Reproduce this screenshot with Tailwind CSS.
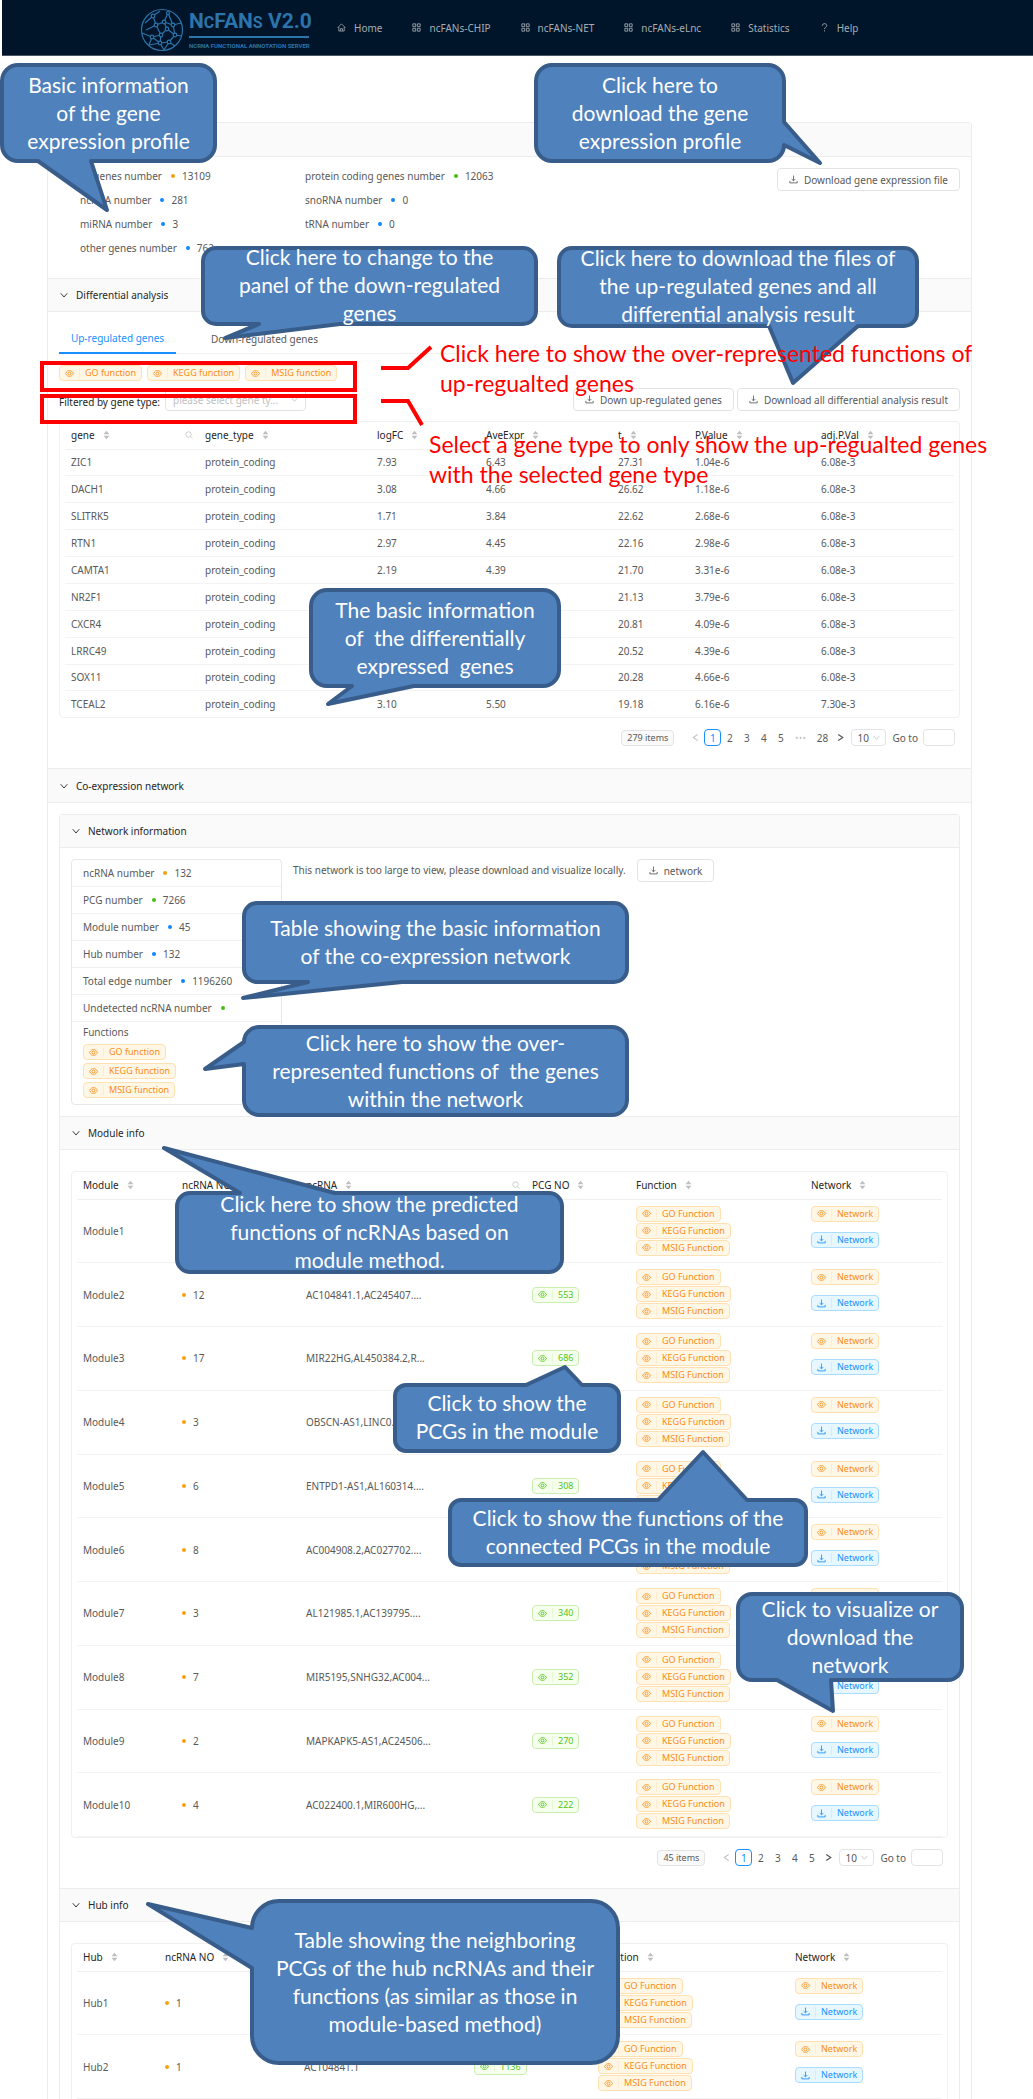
<!DOCTYPE html>
<html lang="en">
<head>
<meta charset="utf-8">
<title>ncFANs V2.0</title>
<script src="https://cdn.jsdelivr.net/npm/@tailwindcss/browser@4"></script>
</head>
<body class="relative bg-white font-['Noto_Sans',sans-serif] text-[10px] leading-4 text-[#595959]">

<svg class="hidden" aria-hidden="true">
  <symbol id="eye" viewBox="0 0 16 16"><g fill="none" stroke="currentColor" stroke-width="1.500"><path d="M1 8C3 4.300 5.300 2.800 8 2.800S13 4.300 15 8c-2 3.700-4.300 5.200-7 5.200S3 11.700 1 8z"/><circle cx="8" cy="8" r="2.600"/></g></symbol>
  <symbol id="download" viewBox="0 0 16 16"><path d="M8 1v9M4.800 7.200 8 10.400l3.200-3.200M1.500 10.500V14h13v-3.500" fill="none" stroke="currentColor" stroke-width="1.500"/></symbol>
  <symbol id="down" viewBox="0 0 16 16"><path d="M1.500 4.500 8 12l6.500-7.500" fill="none" stroke="currentColor" stroke-width="1.800"/></symbol>
  <symbol id="left" viewBox="0 0 16 16"><path d="M12 2.500 4 8l8 5.500" fill="none" stroke="currentColor" stroke-width="1.800"/></symbol>
  <symbol id="right" viewBox="0 0 16 16"><path d="M4 2.500 12 8l-8 5.500" fill="none" stroke="currentColor" stroke-width="2.200"/></symbol>
  <symbol id="sort" viewBox="0 0 8 12"><path d="M4 .8 7.500 5H.5zM4 11.200.5 7h7z" fill="currentColor"/></symbol>
  <symbol id="search" viewBox="0 0 16 16"><g fill="none" stroke="currentColor" stroke-width="1.500"><circle cx="7" cy="7" r="5.500"/><path d="m11 11 4 4"/></g></symbol>
  <symbol id="home" viewBox="0 0 16 16"><path d="M1 8.500 8 1.500l7 7M3.200 7v7.300h9.600V7M6.300 14v-4h3.400v4" fill="none" stroke="currentColor" stroke-width="1.400"/></symbol>
  <symbol id="grid" viewBox="0 0 16 16"><path d="M1.500 1.500h5v5h-5zM9.500 1.500h5v5h-5zM1.500 9.500h5v5h-5zM9.500 9.500h5v5h-5z" fill="none" stroke="currentColor" stroke-width="1.500"/></symbol>
  <symbol id="question" viewBox="0 0 16 16"><path d="M4 5c0-5 8-5 8-.5C12 7.500 8 7.500 8 11M8 13v2" fill="none" stroke="currentColor" stroke-width="1.600"/></symbol>
</svg>

<header class="ml-0.5 flex h-14 items-center border-b border-[#4b5664] bg-[#001529] pl-[138px] text-[#a6adb4]">
  <a href="#" class="flex items-center gap-[5px] text-[#2c74ab]">
    <svg class="mt-1 size-[44px]" viewBox="0 0 44 44" fill="none" stroke="currentColor" stroke-width="1.200">
      <circle cx="22" cy="22" r="20.500"/>
      <path d="M13 8l7-5M13 8l-8 7M13 8l3 9M16 17l-10 5M16 17l8-3M24 14l4-9M24 14l9 3M28 5l5 12M33 17l8-2M33 17l2 10M35 27l7 1M35 27l-8-6M27 21l-3-7M27 21l-6 6M21 27l-5-10M21 27l-9 2M12 29l-10-4M12 29l-3 8M12 29l8 6M20 35l1-8M20 35l-11 2M20 35l4 7M20 35l9-1M29 34l6-7M29 34l6 4M29 34l-5 8"/>
      <g fill="#001529"><circle cx="13" cy="8" r="1.800"/><circle cx="16" cy="17" r="1.800"/><circle cx="24" cy="14" r="1.800"/><circle cx="28" cy="5" r="1.500"/><circle cx="33" cy="17" r="1.800"/><circle cx="35" cy="27" r="1.800"/><circle cx="27" cy="21" r="1.800"/><circle cx="21" cy="27" r="1.800"/><circle cx="12" cy="29" r="1.800"/><circle cx="20" cy="35" r="1.800"/><circle cx="29" cy="34" r="1.800"/></g>
    </svg>
    <span class="mt-1 flex w-[120px] flex-col font-['Roboto',sans-serif] font-bold whitespace-nowrap">
      <span class="text-[21px] leading-[22px]">N<span class="text-[16px]">C</span>FAN<span class="text-[16px]">S</span> V2.0</span>
      <span class="mt-0.5 h-0.5 bg-[#2c74ab]"></span>
      <span class="mt-1 text-[6px] leading-2">NCRNA FUNCTIONAL ANNOTATION SERVER</span>
    </span>
  </a>
  <nav id="nav" class="ml-7 flex items-center gap-[30px] whitespace-nowrap"></nav>
</header>

<main class="mt-[66px] mr-[61px] ml-[47px] rounded-t border-x border-t border-[#ececec]">
  <section>
    <h2 class="flex h-[34px] items-center border-b border-[#ececec] bg-[#fafafa] px-3"><button aria-label="Basic information" class="text-[#262626]"><svg class="size-2"><use href="#down"/></svg></button></h2>
    <div class="flex h-[121px] justify-between pr-[11px] pl-8">
      <dl id="stats" class="grid auto-rows-[24px] grid-cols-[225px_225px] items-center pt-[7px]"></dl>
      <button class="mt-[11px] flex h-[23px] items-center gap-1.5 rounded-sm border border-[#e3e3e3] px-[11px]"><svg class="size-[9px]"><use href="#download"/></svg>Download gene expression file</button>
    </div>
  </section>

  <section>
    <h2 class="flex h-[34px] items-center border-y border-[#ececec] bg-[#fafafa] px-3"><button class="flex items-center gap-2 text-[#262626]"><svg class="size-2"><use href="#down"/></svg>Differential analysis</button></h2>
    <div class="h-[456px] px-[11px] pt-3">
      <div class="flex h-[30px] border-b border-[#f0f0f0]" role="tablist">
        <button role="tab" aria-selected="true" class="-mb-px flex h-[30px] w-[117px] items-center justify-center border-b-2 border-[#1890ff] text-[#1890ff]">Up-regulated genes</button>
        <button role="tab" aria-selected="false" class="ml-[23px] flex h-[30px] w-[131px] items-center justify-center">Down-regulated genes</button>
      </div>
      <div id="upTags" class="mt-[11px] flex gap-[5px]"></div>
      <div class="mt-[7px] flex h-[23px] items-center">
        <label for="gtype" class="mt-1 w-[106px] text-[#262626]">Filtered by gene type:</label>
        <div class="relative w-[141px]">
          <select id="gtype" class="h-[23px] w-full appearance-none rounded-sm border border-[#e3e3e3] bg-white px-[7px] text-[#bfbfbf]"><option>please select gene ty...</option></select>
          <svg class="absolute top-2 right-2 size-[7px] text-[#bfbfbf]"><use href="#down"/></svg>
        </div>
        <button class="ml-auto flex h-[23px] items-center gap-1.5 rounded-sm border border-[#e3e3e3] px-[11px]"><svg class="size-[9px]"><use href="#download"/></svg>Down up-regulated genes</button>
        <button class="ml-[3px] flex h-[23px] items-center gap-1.5 rounded-sm border border-[#e3e3e3] px-[11px]"><svg class="size-[9px]"><use href="#download"/></svg>Download all differential analysis result</button>
      </div>
      <div class="mt-2.5 rounded-sm border border-[#f0f0f0] px-[5px]">
        <table class="h-[295px] w-full table-fixed text-left">
          <colgroup><col class="w-[134px]"><col class="w-[172px]"><col class="w-[109px]"><col class="w-[132px]"><col class="w-[77px]"><col class="w-[126px]"><col></colgroup>
          <thead id="geneHead"></thead>
          <tbody id="genes"></tbody>
        </table>
      </div>
      <div id="pager1" class="mt-[11px] flex h-[17px] items-center justify-end pr-[5px]"></div>
    </div>
  </section>

  <section>
    <h2 class="flex h-[35px] items-center border-y border-[#ececec] bg-[#fafafa] px-3"><button class="flex items-center gap-2 text-[#262626]"><svg class="size-2"><use href="#down"/></svg>Co-expression network</button></h2>
    <div class="px-[11px] pt-[11px]">
      <div class="rounded-t border-x border-t border-[#ececec]">
        <h3 class="flex h-[33px] items-center border-b border-[#ececec] bg-[#fafafa] px-3"><button class="flex items-center gap-2 text-[#262626]"><svg class="size-2"><use href="#down"/></svg>Network information</button></h3>
        <div class="flex h-[268px] items-start gap-[11px] px-[11px] pt-[11px]">
          <ul id="netinfo" class="w-[211px] divide-y divide-[#f0f0f0] rounded-sm border border-[#e8e8e8]"></ul>
          <p class="leading-[23px]">This network is too large to view, please download and visualize locally.</p>
          <button class="flex h-[23px] items-center gap-1.5 rounded-sm border border-[#e3e3e3] px-[11px]"><svg class="size-[9px]"><use href="#download"/></svg>network</button>
        </div>

        <h3 class="flex h-[34px] items-center border-y border-[#ececec] bg-[#fafafa] px-3"><button class="flex items-center gap-2 text-[#262626]"><svg class="size-2"><use href="#down"/></svg>Module info</button></h3>
        <div class="h-[738px] px-[11px] pt-[21px]">
          <div class="rounded-sm border border-[#f0f0f0] px-[5px]">
            <table class="h-[665px] w-full table-fixed text-left">
              <colgroup><col class="w-[99px]"><col class="w-[124px]"><col class="w-[226px]"><col class="w-[104px]"><col class="w-[175px]"><col></colgroup>
              <thead id="moduleHead"></thead>
              <tbody id="modules"></tbody>
            </table>
          </div>
          <div id="pager2" class="mt-[11px] flex h-[17px] items-center justify-end pr-[5px]"></div>
        </div>

        <h3 class="flex h-[34px] items-center border-y border-[#ececec] bg-[#fafafa] px-3"><button class="flex items-center gap-2 text-[#262626]"><svg class="size-2"><use href="#down"/></svg>Hub info</button></h3>
        <div class="px-[11px] pt-[21px]">
          <div class="rounded-t-sm border-x border-t border-[#f0f0f0] px-[5px]">
            <table class="h-[155px] w-full table-fixed text-left">
              <colgroup><col class="w-[82px]"><col class="w-[139px]"><col class="w-[170px]"><col class="w-[124px]"><col class="w-[197px]"><col></colgroup>
              <thead id="hubHead"></thead>
              <tbody id="hubs"></tbody>
            </table>
          </div>
        </div>
      </div>
    </div>
  </section>
</main>

<!-- Tutorial annotations laid over the page -->
<div class="absolute inset-0 overflow-hidden font-['Lato',sans-serif] text-[21px] leading-7 whitespace-nowrap text-white">
  <svg class="absolute top-0 left-0" width="1033" height="2099" fill="#4f81bd" stroke="#385d8a" stroke-width="4" stroke-linejoin="round">
    <path d="M18 65H199a16 16 0 0 1 16 16V145a16 16 0 0 1-16 16H91L107 210 38 161H18a16 16 0 0 1-16-16V81a16 16 0 0 1 16-16z"/>
    <path d="M552 65H768a16 16 0 0 1 16 16V122L820 163 784 145a16 16 0 0 1-16 16H552a16 16 0 0 1-16-16V81a16 16 0 0 1 16-16z"/>
    <path d="M216 248H523a13 13 0 0 1 13 13V311a13 13 0 0 1-13 13H340L225 338 259 324H216a13 13 0 0 1-13-13V261a13 13 0 0 1 13-13z"/>
    <path d="M572 248H904a13 13 0 0 1 13 13V313a13 13 0 0 1-13 13H858L793 383 769 326H572a13 13 0 0 1-13-13V261a13 13 0 0 1 13-13z"/>
    <path d="M327 590H543a16 16 0 0 1 16 16V670a16 16 0 0 1-16 16H414L328 704 352 686H327a16 16 0 0 1-16-16V606a16 16 0 0 1 16-16z"/>
    <path d="M257 903H614a13 13 0 0 1 13 13V969a13 13 0 0 1-13 13H402L243 998 308 982H257a13 13 0 0 1-13-13V916a13 13 0 0 1 13-13z"/>
    <path d="M259 1027H612a15 15 0 0 1 15 15V1100a15 15 0 0 1-15 15H259a15 15 0 0 1-15-15V1064L205 1069 244 1042a15 15 0 0 1 15-15z"/>
    <path d="M190 1193H240L164 1148 335 1193H549a13 13 0 0 1 13 13V1259a13 13 0 0 1-13 13H190a13 13 0 0 1-13-13V1206a13 13 0 0 1 13-13z"/>
    <path d="M406 1385H526L565 1367 582 1385H608a11 11 0 0 1 11 11V1440a11 11 0 0 1-11 11H406a11 11 0 0 1-11-11V1396a11 11 0 0 1 11-11z"/>
    <path d="M461 1500H658L703 1452 747 1500H795a11 11 0 0 1 11 11V1554a11 11 0 0 1-11 11H461a11 11 0 0 1-11-11V1511a11 11 0 0 1 11-11z"/>
    <path d="M752 1594H948a14 14 0 0 1 14 14V1666a14 14 0 0 1-14 14H831L833 1711 777 1680H752a14 14 0 0 1-14-14V1608a14 14 0 0 1 14-14z"/>
    <path d="M279 1901H591a27 27 0 0 1 27 27V2036a27 27 0 0 1-27 27H279a27 27 0 0 1-27-27V1968L148 1904 252 1928a27 27 0 0 1 27-27z"/>
    <g fill="none" stroke="#ff0000" stroke-linejoin="miter">
      <path d="M42 363H355V390H42zM42 396H355V422H42z"/>
      <path d="M381 368H408L431 347M381 401H408L422 425"/>
    </g>
  </svg>
  <p class="absolute top-[71px] left-[2px] w-[213px] text-center">Basic information<br>of the gene<br>expression profile</p>
  <p class="absolute top-[71px] left-[536px] w-[248px] text-center">Click here to<br>download the gene<br>expression profile</p>
  <p class="absolute top-[243px] left-[203px] w-[333px] text-center">Click here to change to the<br>panel of the down-regulated<br>genes</p>
  <p class="absolute top-[244px] left-[559px] w-[358px] text-center">Click here to download the files of<br>the up-regulated genes and all<br>differential analysis result</p>
  <p class="absolute top-[596px] left-[311px] w-[248px] text-center whitespace-pre">The basic information
of  the differentially
expressed  genes</p>
  <p class="absolute top-[914px] left-[244px] w-[383px] text-center">Table showing the basic information<br>of the co-expression network</p>
  <p class="absolute top-[1029px] left-[244px] w-[383px] text-center whitespace-pre">Click here to show the over-
represented functions of  the genes
within the network</p>
  <p class="absolute top-[1190px] left-[177px] w-[385px] text-center">Click here to show the predicted<br>functions of ncRNAs based on<br>module method.</p>
  <p class="absolute top-[1389px] left-[395px] w-[224px] text-center">Click to show the<br>PCGs in the module</p>
  <p class="absolute top-[1504px] left-[450px] w-[356px] text-center">Click to show the functions of the<br>connected PCGs in the module</p>
  <p class="absolute top-[1595px] left-[738px] w-[224px] text-center">Click to visualize or<br>download the<br>network</p>
  <p class="absolute top-[1926px] left-[252px] w-[366px] text-center">Table showing the neighboring<br>PCGs of the hub ncRNAs and their<br>functions (as similar as those in<br>module-based method)</p>
  <p class="absolute top-[338px] left-[440px] text-[23px] leading-[30px] text-[#ff0000]">Click here to show the over-represented functions of<br>up-regualted genes</p>
  <p class="absolute top-[429px] left-[429px] text-[23px] leading-[30px] text-[#ff0000]">Select a gene type to only show the up-regualted genes<br>with the selected gene type</p>
</div>

<script>
const $ = id => document.getElementById(id);
const icon = (name, cls) => `<svg class="${cls}"><use href="#${name}"/></svg>`;

const tones = {
  orange: 'border-[#ffe0b0] bg-[#fff7e6] text-[#fa8c16]',
  green: 'border-[#c9efb0] bg-[#f6ffed] text-[#52c41a]',
  blue: 'border-[#a9dcff] bg-[#e6f7ff] text-[#1890ff]'
};
const tag = (text, tone = 'orange', name = 'eye') =>
  `<button class="flex h-4 items-center rounded-sm border px-[5px] text-[9px] leading-3 whitespace-nowrap ${tones[tone]}">${icon(name, 'size-[9px]')}<span class="mr-[5px] ml-[5px] h-2.5 w-px bg-current/10"></span>${text}</button>`;

const dots = { orange: 'bg-[#faa00f]', green: 'bg-[#45bd12]', blue: 'bg-[#1187ff]' };
const dot = color => `<span class="mx-1 inline-block size-1 rounded-full align-middle ${dots[color]}"></span>`;

$('nav').innerHTML = [['home', 'Home'], ['grid', 'ncFANs-CHIP'], ['grid', 'ncFANs-NET'], ['grid', 'ncFANs-eLnc'], ['grid', 'Statistics'], ['question', 'Help']]
  .map(([i, t]) => `<a href="#" class="flex items-center gap-2">${icon(i, 'size-[9px]')}${t}</a>`).join('');

$('stats').innerHTML = [
  ['all genes number', 'orange', 13109], ['protein coding genes number', 'green', 12063],
  ['ncRNA number', 'blue', 281], ['snoRNA number', 'blue', 0],
  ['miRNA number', 'blue', 3], ['tRNA number', 'blue', 0],
  ['other genes number', 'blue', 762]
].map(([k, c, v]) => `<div class="flex items-center"><dt class="mr-[5px]">${k}</dt><dd class="flex items-center">${dot(c)}<span class="ml-[3px]">${v}</span></dd></div>`).join('');

$('upTags').innerHTML = ['GO function', 'KEGG function', 'MSIG function'].map(t => tag(t)).join('');

const head = (cols, searched) => '<tr class="border-b border-[#f0f0f0]">' + cols.map(c =>
  `<th scope="col" class="h-[27px] px-1.5 font-normal text-[#262626]"><span class="flex items-center gap-2">${c}${icon('sort', 'h-2.5 w-[7px] text-[#bfbfbf]')}${c === searched ? icon('search', 'ml-auto size-2 text-[#bfbfbf]') : ''}</span></th>`).join('') + '</tr>';

$('geneHead').innerHTML = head(['gene', 'gene_type', 'logFC', 'AveExpr', 't', 'P.Value', 'adj.P.Val'], 'gene');
$('genes').innerHTML = [
  ['ZIC1', '7.93', '6.43', '27.31', '1.04e-6', '6.08e-3'],
  ['DACH1', '3.08', '4.66', '26.62', '1.18e-6', '6.08e-3'],
  ['SLITRK5', '1.71', '3.84', '22.62', '2.68e-6', '6.08e-3'],
  ['RTN1', '2.97', '4.45', '22.16', '2.98e-6', '6.08e-3'],
  ['CAMTA1', '2.19', '4.39', '21.70', '3.31e-6', '6.08e-3'],
  ['NR2F1', '', '', '21.13', '3.79e-6', '6.08e-3'],
  ['CXCR4', '', '', '20.81', '4.09e-6', '6.08e-3'],
  ['LRRC49', '', '', '20.52', '4.39e-6', '6.08e-3'],
  ['SOX11', '', '', '20.28', '4.66e-6', '6.08e-3'],
  ['TCEAL2', '3.10', '5.50', '19.18', '6.16e-6', '7.30e-3']
].map(r => '<tr class="border-b border-[#f3f3f3] last:border-b-0">' + [r[0], 'protein_coding', ...r.slice(1)].map(v => `<td class="px-1.5">${v}</td>`).join('') + '</tr>').join('');

const pager = (items, pages) => `
  <span class="mr-[17px] flex h-4 items-center rounded-sm border border-[#e3e3e3] bg-[#fafafa] px-[5px] text-[9px]">${items} items</span>
  <button aria-label="Previous page" class="mr-1 text-[#bfbfbf]">${icon('left', 'size-[9px]')}</button>
  ${pages.map((p, i) => i === 0
    ? `<button class="h-[17px] w-[17px] rounded-sm border border-[#1890ff] leading-[14px] text-[#1890ff]">${p}</button>`
    : p === '•••' ? '<span class="w-[23px] text-center text-[8px] tracking-widest text-[#bfbfbf]">•••</span>'
    : p > 9 ? `<button class="w-5 text-center">${p}</button>` : `<button class="w-[17px] text-center">${p}</button>`).join('')}
  <button aria-label="Next page" class="mr-1.5 ml-1">${icon('right', 'size-[9px]')}</button>
  <span class="relative w-[35px]"><select aria-label="Page size" class="h-[17px] w-full appearance-none rounded-sm border border-[#e3e3e3] bg-white pl-[5px] leading-[14px]"><option>10</option></select>${icon('down', 'absolute top-[5px] right-[6px] size-[7px] text-[#bfbfbf]')}</span>
  <label class="ml-1.5 flex items-center gap-[5px]">Go to<input class="h-[17px] w-8 rounded-sm border border-[#e3e3e3]"></label>`;
$('pager1').innerHTML = pager(279, [1, 2, 3, 4, 5, '•••', 28]);
$('pager2').innerHTML = pager(45, [1, 2, 3, 4, 5]);

$('netinfo').innerHTML = [
  ['ncRNA number', 'orange', 132], ['PCG number', 'green', 7266], ['Module number', 'blue', 45],
  ['Hub number', 'blue', 132], ['Total edge number', 'blue', 1196260], ['Undetected ncRNA number', 'green', '']
].map(([k, c, v]) => `<li class="flex h-[27px] items-center px-[11px]"><span class="mr-[5px]">${k}</span>${dot(c)}<span class="ml-[3px]">${v}</span></li>`).join('')
+ `<li class="px-[11px] pt-0.5 pb-1.5"><p>Functions</p><div class="mt-1 flex flex-col items-start gap-[3px]">${['GO function', 'KEGG function', 'MSIG function'].map(t => tag(t)).join('')}</div></li>`;

const rows = list => list.map(([name, n, rna, pcg]) => `<tr class="border-b border-[#f3f3f3]">
  <td class="px-1.5">${name}</td>
  <td class="px-0.5"><span class="flex items-center">${n === '' ? '' : dot('orange')}<span class="ml-[3px]">${n}</span></span></td>
  <td class="px-1.5">${rna}</td>
  <td class="px-1.5"><div class="flex">${tag(pcg, 'green')}</div></td>
  <td class="px-1.5 pt-1.5 align-top"><div class="flex flex-col items-start gap-px">${['GO Function', 'KEGG Function', 'MSIG Function'].map(t => tag(t)).join('')}</div></td>
  <td class="px-1.5 pt-1.5 align-top"><div class="flex flex-col items-start gap-2.5">${tag('Network')}${tag('Network', 'blue', 'download')}</div></td>
</tr>`).join('');

$('moduleHead').innerHTML = head(['Module', 'ncRNA NO', 'ncRNA', 'PCG NO', 'Function', 'Network'], 'ncRNA');
$('modules').innerHTML = rows([
  ['Module1', '', '', ''],
  ['Module2', 12, 'AC104841.1,AC245407....', 553],
  ['Module3', 17, 'MIR22HG,AL450384.2,R...', 686],
  ['Module4', 3, 'OBSCN-AS1,LINC0...', ''],
  ['Module5', 6, 'ENTPD1-AS1,AL160314....', 308],
  ['Module6', 8, 'AC004908.2,AC027702....', ''],
  ['Module7', 3, 'AL121985.1,AC139795....', 340],
  ['Module8', 7, 'MIR5195,SNHG32,AC004...', 352],
  ['Module9', 2, 'MAPKAPK5-AS1,AC24506...', 270],
  ['Module10', 4, 'AC022400.1,MIR600HG,...', 222]
]);
$('hubHead').innerHTML = head(['Hub', 'ncRNA NO', 'ncRNA', 'PCG NO', 'Function', 'Network'], 'ncRNA');
$('hubs').innerHTML = rows([
  ['Hub1', 1, '', ''],
  ['Hub2', 1, 'AC104841.1', 1136]
]);
</script>
</body>
</html>
